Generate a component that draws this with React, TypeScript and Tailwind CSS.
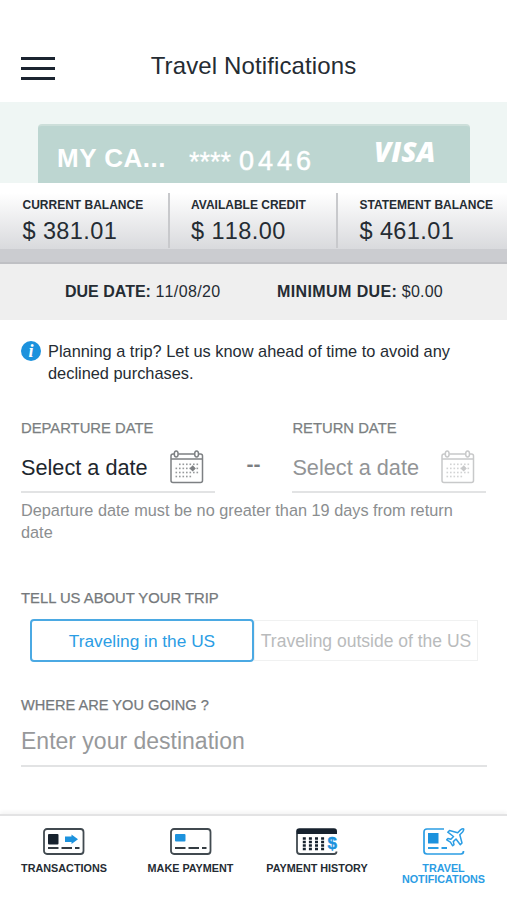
import { useState } from 'react'

const BALANCES = [
  { label: 'CURRENT BALANCE', value: '$ 381.01', cell: 'w-[170px] border-r-2 pl-[22.5px]' },
  { label: 'AVAILABLE CREDIT', value: '$ 118.00', cell: 'w-[168px] border-r-2 pl-[21px]' },
  { label: 'STATEMENT BALANCE', value: '$ 461.01', cell: 'w-[169px] pl-[21.5px]' },
]

const LABEL = 'leading-[18px] whitespace-nowrap [-webkit-text-stroke:0.25px]'

function CalendarIcon() {
  const rows = [
    { y: 14.3, cols: [1, 2, 3, 4, 5, 6] },
    { y: 18.4, cols: [0, 1, 2, 3, 4, 5, 6] },
    { y: 22.5, cols: [0, 1, 2, 3, 4, 5, 6] },
    { y: 26.5, cols: [0, 1, 2, 3, 4] },
  ]
  return (
    <svg width="34" height="34" viewBox="0 0 34 34" fill="none" stroke="currentColor" strokeWidth="1.5">
      <path d="M4 4H3Q1 4 1 6V30.5Q1 32.5 3 32.5H30.5Q32.5 32.5 32.5 30.5V6Q32.5 4 30.5 4H28.8M8.3 4H24.4M1 9H32.5" />
      <ellipse cx="6.2" cy="3.9" rx="1.9" ry="3" />
      <ellipse cx="26.6" cy="3.9" rx="1.9" ry="3" />
      <g fill="currentColor" stroke="none" opacity="0.8">
        {rows.map((r) => r.cols.map((c) => (
          <rect key={`${r.y}-${c}`} x={5.5 + c * 3.5} y={r.y - 0.8} width="1.6" height="1.6" />
        )))}
      </g>
      <path d="M22.7 15.2L25.8 18.4L22.7 21.6L19.6 18.4Z" fill="currentColor" stroke="none" />
    </svg>
  )
}

function TransactionsIcon() {
  return (
    <svg width="42" height="28" viewBox="0 0 42 28" fill="none">
      <rect x="1" y="1" width="39.5" height="25" rx="3" stroke="#414a50" strokeWidth="1.8" />
      <rect x="5" y="6" width="10.5" height="10.5" rx="1" fill="#17222e" />
      <path d="M22 8.5H28.5V6.5L35 11.3L28.5 16V14H22Z" fill="#1c92dd" />
      <path d="M5 20H15.5M18.5 20H29M32 20H36.5" stroke="#343c42" strokeWidth="2" />
    </svg>
  )
}

function PaymentIcon() {
  return (
    <svg width="42" height="28" viewBox="0 0 42 28" fill="none">
      <rect x="1" y="1" width="39.5" height="25" rx="3" stroke="#414a50" strokeWidth="1.8" />
      <rect x="5" y="6" width="10.5" height="7.5" rx="1" fill="#1c92dd" />
      <path d="M5 20H15.5M18.5 20H29M32 20H36.5" stroke="#343c42" strokeWidth="2" />
    </svg>
  )
}

function HistoryIcon() {
  return (
    <svg width="42" height="28" viewBox="0 0 42 28" fill="none">
      <path d="M1 6V23Q1 26 4 26H38Q40.5 26 40.5 23.5" stroke="#414a50" strokeWidth="1.8" />
      <path d="M0.2 6V3.5Q0.2 0.3 3.5 0.3H38Q41 0.3 41 3.5V6Z" fill="#17222e" />
      {[10.5, 14, 17.5, 21].map((y) => (
        <path key={y} d={`M6.8 ${y}H28.5`} stroke="#17222e" strokeWidth="2.3" strokeDasharray="3 3.1" />
      ))}
      <text x="31.5" y="21" fontFamily="Liberation Sans, sans-serif" fontWeight="700" fontSize="17" fill="#1c92dd" stroke="#1c92dd" strokeWidth="0.4">$</text>
    </svg>
  )
}

function TravelIcon() {
  return (
    <svg width="42" height="28" viewBox="0 0 42 28" fill="none" stroke="#2b9de4" strokeWidth="1.7">
      <path d="M21 1H4Q1 1 1 4V23Q1 26 4 26H38Q40.5 26 40.5 23" />
      <rect x="5" y="5" width="10.5" height="10.5" fill="#1c92dd" stroke="none" />
      <path d="M5 20H15.5M18.5 20H24" strokeWidth="2" />
      <path
        d="M34.7 4.7L37.5 1.9Q39.5 0.4 40.6 0.9Q41.1 2 39.6 4L36.8 6.8L39 15L37.3 16.7L33 11L30.3 13.6L31 16.6L29.7 17.8L27.4 14.1L23.7 11.8L24.9 10.5L27.9 11.2L30.5 8.5L24.8 4.2L26.5 2.5Z"
        strokeWidth="1.5"
        strokeLinejoin="round"
      />
    </svg>
  )
}

function DateField({ label, disabled }: { label: string; disabled?: boolean }) {
  return (
    <div className="w-[194px]">
      <div className={`${LABEL} text-[14.8px] text-[#7b7f82]`}>{label}</div>
      <button className={`mt-[11px] flex h-[45px] w-full items-center justify-between border-b-2 border-[#e2e3e4] pb-[5px] pr-[11px] text-[21.7px] ${disabled ? 'text-[#929496]' : 'text-[#20262d]'}`}>
        <span className="whitespace-nowrap pt-[3px]">Select a date</span>
        <span className={disabled ? 'text-[#c8c9ca]' : 'text-[#7d8083]'}><CalendarIcon /></span>
      </button>
    </div>
  )
}

export default function App() {
  const [trip, setTrip] = useState('us')

  const tabBase = 'whitespace-nowrap pt-[2px]'
  const tabOn = 'h-[43px] rounded border-2 border-[#4ba9e3] text-[17.3px] text-[#2b9de4]'
  const tabOff = 'h-[41px] border border-[#f0f1f1] text-[17.5px] text-[#b9bbbc]'

  return (
    <div className="flex h-[900px] w-[507px] flex-col overflow-hidden bg-white font-['Liberation_Sans',Arial,sans-serif] text-[#252c33]">
      <header className="relative flex h-[102px] shrink-0 items-center justify-center pt-[29px]">
        <button className="absolute left-[21px] top-[56.5px] flex w-[34px] flex-col gap-[7px]" aria-label="Menu">
          <span className="h-[3px] bg-[#1b2430]" />
          <span className="h-[3px] bg-[#1b2430]" />
          <span className="h-[3px] bg-[#1b2430]" />
        </button>
        <h1 className="text-[24px] leading-[30px] tracking-[0.12px]">Travel Notifications</h1>
      </header>

      <section className="h-[81px] shrink-0 bg-[#eff6f4] px-[38px] pt-[22px]">
        <div className="flex h-[59px] w-[432px] rounded-t border-t-2 border-[#cddfda] bg-[#bdd6d1] text-white">
          <span className="ml-[19px] mt-[16px] w-[132px] whitespace-nowrap text-[26px] font-bold leading-[32px] tracking-[0.5px]">MY CA...</span>
          <span className="mt-[21px] w-[50px] text-[27px] leading-[30px] [-webkit-text-stroke:0.3px]">****</span>
          <span className="mt-[19px] w-[135px] text-[27px] leading-[32px] tracking-[4px] [-webkit-text-stroke:0.5px]">0446</span>
          <span className="mt-[9px] font-['Open_Sans',sans-serif] text-[28px] font-extrabold italic leading-[32px]">VISA</span>
        </div>
      </section>

      <section className="h-[66px] shrink-0 bg-linear-to-b from-white from-15% to-[#d9dadd]">
        <div className="flex pt-[10px]">
          {BALANCES.map((b) => (
            <div key={b.label} className={`h-[55px] border-[#c8c9cc] whitespace-nowrap ${b.cell}`}>
              <div className="pt-[3px] text-[12px] font-bold leading-[18px]">{b.label}</div>
              <div className="mt-[3px] text-[23.5px] leading-[28px] tracking-[0.4px] [font-kerning:none]">{b.value}</div>
            </div>
          ))}
        </div>
      </section>
      <div className="h-[15px] shrink-0 border-b-2 border-[#bfc0c4] bg-[#cbccd0]" />
      <section className="flex h-[56px] shrink-0 items-center bg-[#efefef] pl-[65px] text-[16px]">
        <p className="w-[212px] whitespace-nowrap"><b>DUE DATE:</b> <span className="tracking-[0.35px] [font-kerning:none]">11/08/20</span></p>
        <p className="whitespace-nowrap"><b className="tracking-[0.4px]">MINIMUM DUE:</b> <span className="tracking-[0.2px]">$0.00</span></p>
      </section>

      <main className="flex-1 px-[21px] pt-[21px]">
        <div className="flex gap-[7px]">
          <span className="flex h-5 w-5 shrink-0 items-center justify-center rounded-full bg-[#1c92dd] font-['Liberation_Serif',serif] text-[18px] font-bold italic leading-none text-white">i</span>
          <p className="-mt-px whitespace-nowrap text-[16.36px] leading-[22px]">
            Planning a trip? Let us know ahead of time to avoid any<br />declined purchases.
          </p>
        </div>

        <div className="mt-[35px] flex">
          <DateField label="DEPARTURE DATE" />
          <span className="w-[78px] pt-[32px] text-center text-[21px] font-bold leading-[26px] text-[#7b7e81]">--</span>
          <DateField label="RETURN DATE" disabled />
        </div>
        <p className="mt-[6px] whitespace-nowrap text-[16.3px] leading-[22px] text-[#8b8e90]">
          Departure date must be no greater than 19 days from return<br />date
        </p>

        <h2 className={`mt-[46px] text-[14.8px] text-[#75797c] ${LABEL}`}>TELL US ABOUT YOUR TRIP</h2>
        <div className="mt-[12px] flex items-center pl-[9px]">
          <button onClick={() => setTrip('us')} className={`w-[224px] ${tabBase} ${trip === 'us' ? tabOn : tabOff}`}>Traveling in the US</button>
          <button onClick={() => setTrip('abroad')} className={`w-[224px] ${tabBase} ${trip === 'abroad' ? tabOn : tabOff}`}>Traveling outside of the US</button>
        </div>

        <h2 className={`mt-[34px] text-[14.6px] text-[#75797c] ${LABEL}`}>WHERE ARE YOU GOING ?</h2>
        <input
          className="mt-[3px] block h-[50px] w-[466px] border-b-2 border-[#e2e3e4] text-[23px] outline-none placeholder:text-[#97999b]"
          placeholder="Enter your destination"
        />
      </main>

      <nav className="flex h-[86px] shrink-0 border-t-2 border-[#e3e3e4] pt-[12px] text-center text-[10.8px] font-bold leading-[11px] shadow-[0_-2px_4px_rgba(0,0,0,0.05)]">
        <button className="flex w-[128px] flex-col items-center gap-[7px] whitespace-nowrap"><TransactionsIcon />TRANSACTIONS</button>
        <button className="flex w-[125px] flex-col items-center gap-[7px] whitespace-nowrap"><PaymentIcon />MAKE PAYMENT</button>
        <button className="flex w-[128px] flex-col items-center gap-[7px] whitespace-nowrap"><HistoryIcon />PAYMENT HISTORY</button>
        <button className="flex w-[125px] flex-col items-center gap-[7px] text-[#2b9de4]"><TravelIcon /><span>TRAVEL<br />NOTIFICATIONS</span></button>
      </nav>
    </div>
  )
}
